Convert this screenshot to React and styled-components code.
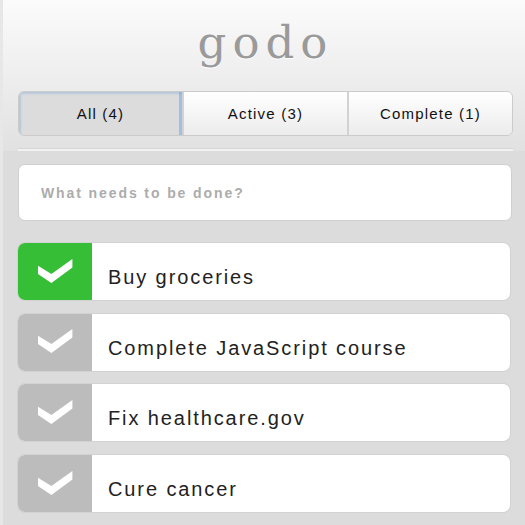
import React, { useState } from "react";
import styled, { createGlobalStyle } from "styled-components";

const GlobalStyle = createGlobalStyle`
  body {
    margin: 0;
    background: #dcdcdc;
    font-family: "Liberation Sans", Arial, sans-serif;
  }
`;

const Page = styled.div`
  width: 525px;
  min-height: 525px;
  box-sizing: border-box;
  border-left: 3px solid #e7e7e7;
  background: #dcdcdc;
`;

const Header = styled.header`
  display: flex;
  flex-direction: column;
  padding: 0 12px 0 15px;
  background: linear-gradient(#fbfbfb, #e1e1e1);
`;

const Title = styled.h1`
  margin: 0;
  height: 91px;
  display: flex;
  justify-content: center;
  align-items: center;
  padding: 0 0 6px 0;
  box-sizing: border-box;
  font-family: "DejaVu Serif", serif;
  font-weight: normal;
  font-size: 45px;
  letter-spacing: 6px;
  color: #9a9a9a;
  text-shadow: 0 1px 0 #ffffff;
`;

const Tabs = styled.div`
  display: flex;
  height: 45px;
  border: 1px solid #cbcbcb;
  border-radius: 6px;
  overflow: hidden;
  box-sizing: border-box;
`;

const Tab = styled.button`
  flex: 1;
  border: none;
  border-left: ${(p) => (p.$first ? "none" : "2px solid #d2d2d2")};
  padding: 0;
  font-family: "Liberation Sans", Arial, sans-serif;
  font-size: 15px;
  letter-spacing: 1.2px;
  color: #111111;
  cursor: pointer;
  background: ${(p) =>
    p.$active ? "#dcdcdc" : "linear-gradient(#ffffff, #ececec)"};
  box-shadow: ${(p) =>
    p.$active
      ? "inset 2px 2px 2px rgba(110,160,215,0.35), inset -3px 0 0 #9fbfe3"
      : "none"};
`;

const Separator = styled.div`
  height: 2px;
  margin-top: 12px;
  border-top: 1px solid #d6d6d6;
  background: #f2f2f2;
`;

const Content = styled.main`
  display: flex;
  flex-direction: column;
  padding: 13px 13px 13px 15px;
`;

const NewTodo = styled.input`
  height: 57px;
  box-sizing: border-box;
  border: 1px solid #d0d0d0;
  border-radius: 7px;
  padding: 0 22px;
  margin-bottom: 22px;
  font-family: "Liberation Sans", Arial, sans-serif;
  font-size: 14px;
  font-weight: bold;
  letter-spacing: 1.9px;
  color: #333;
  outline: none;
  &::placeholder {
    color: #acacac;
  }
`;

const List = styled.ul`
  list-style: none;
  margin: 0;
  padding: 0 2px 0 0;
  display: flex;
  flex-direction: column;
  gap: 13.7px;
`;

const Item = styled.li`
  display: flex;
  height: 57px;
  background: #ffffff;
  border-radius: 7px;
  overflow: hidden;
  box-shadow: 0 0 0 1px #d2d2d2;
`;

const Check = styled.div`
  width: 74px;
  flex-shrink: 0;
  display: flex;
  justify-content: center;
  align-items: center;
  padding-bottom: 2px;
  box-sizing: border-box;
  cursor: pointer;
  background: ${(p) => (p.$done ? "#36be36" : "#bcbcbc")};
`;

const Label = styled.span`
  display: flex;
  align-items: center;
  padding: 12px 0 0 16px;
  font-size: 20px;
  letter-spacing: 1.9px;
  color: #222222;
`;

function CheckMark() {
  return (
    <svg width="35" height="24" viewBox="0 0 35 24">
      <polygon
        points="0,6.7 13.4,15 34.4,0 34.4,8.4 13.4,24 0,15"
        fill="#ffffff"
      />
    </svg>
  );
}

function App() {
  const [filter, setFilter] = useState("all");
  const [text, setText] = useState("");
  const [todos, setTodos] = useState([
    { title: "Buy groceries", done: true },
    { title: "Complete JavaScript course", done: false },
    { title: "Fix healthcare.gov", done: false },
    { title: "Cure cancer", done: false },
  ]);

  const toggle = (i) => {
    const copy = todos.slice();
    copy[i] = { ...copy[i], done: !copy[i].done };
    setTodos(copy);
  };
  const handleKey = (e) => {
    if (e.key === "Enter" && text.trim()) {
      setTodos([...todos, { title: text.trim(), done: false }]);
      setText("");
    }
  };

  const active = todos.filter((t) => !t.done).length;
  const tabs = [
    { id: "all", label: `All (${todos.length})` },
    { id: "active", label: `Active (${active})` },
    { id: "complete", label: `Complete (${todos.length - active})` },
  ];
  const shown = todos
    .map((t, i) => ({ ...t, i }))
    .filter((t) =>
      filter === "all" ? true : filter === "active" ? !t.done : t.done
    );

  return (
    <Page>
      <GlobalStyle />
      <Header>
        <Title>godo</Title>
        <Tabs>
          {tabs.map((t, i) => (
            <Tab
              key={t.id}
              $first={i === 0}
              $active={filter === t.id}
              onClick={() => setFilter(t.id)}
            >
              {t.label}
            </Tab>
          ))}
        </Tabs>
        <Separator />
      </Header>
      <Content>
        <NewTodo
          placeholder="What needs to be done?"
          value={text}
          onChange={(e) => setText(e.target.value)}
          onKeyDown={handleKey}
        />
        <List>
          {shown.map((t) => (
            <Item key={t.i}>
              <Check $done={t.done} onClick={() => toggle(t.i)}>
                <CheckMark />
              </Check>
              <Label>{t.title}</Label>
            </Item>
          ))}
        </List>
      </Content>
    </Page>
  );
}

export default App;
